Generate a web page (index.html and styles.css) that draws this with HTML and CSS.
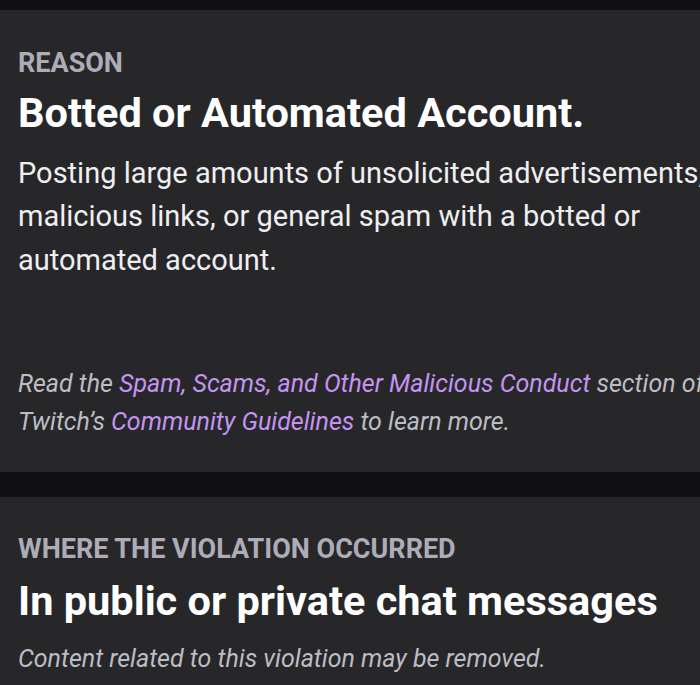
FILE: index.html
```html
<!DOCTYPE html>
<html>
<head>
<meta charset="utf-8">
<link rel="stylesheet" href="styles.css">
</head>
<body>
<div class="page">
  <section class="card card-reason">
    <div class="label">REASON</div>
    <h2 class="title">Botted or Automated Account.</h2>
    <p class="desc">Posting large amounts of unsolicited advertisements, malicious links, or general spam with a botted or automated account.</p>
    <p class="note note-learn">Read the <a class="link" href="#">Spam, Scams, and Other Malicious Conduct</a> section of Twitch’s <a class="link" href="#">Community Guidelines</a> to learn more.</p>
  </section>
  <section class="card card-where">
    <div class="label">WHERE THE VIOLATION OCCURRED</div>
    <h2 class="title">In public or private chat messages</h2>
    <p class="note note-removed">Content related to this violation may be removed.</p>
  </section>
</div>
</body>
</html>
```

FILE: styles.css
```css
html, body {
  margin: 0;
  padding: 0;
  background: #111113;
  overflow: hidden;
}
body {
  font-family: Roboto, "Liberation Sans", sans-serif;
  color: #efeff1;
}
.page {
  width: 760px;
  padding-top: 10px;
  display: flex;
  flex-direction: column;
  gap: 25px;
}
.card {
  background: #27272a;
  padding: 38px 18px 31px 18px;
}
.card-where {
  padding-top: 37px;
  padding-bottom: 40px;
}
.label {
  font-size: 27px;
  font-weight: 700;
  color: #adadb8;
  line-height: 30px;
}
.title {
  margin: 11px 0 0 0;
  font-size: 41.5px;
  font-weight: 700;
  line-height: 48px;
  color: #ffffff;
}
.card-where .title {
  margin-top: 13px;
}
.desc {
  margin: 14.5px 0 0 0;
  font-size: 29px;
  line-height: 43.5px;
  color: #efeff1;
}
.note {
  font-size: 25px;
  line-height: 38px;
  font-style: italic;
  color: #bdbdc4;
}
.note-learn {
  margin: 82.5px 0 0 0;
}
.note-removed {
  margin: 15px 0 0 0;
}
.link {
  color: #c495f0;
  text-decoration: none;
}
```
